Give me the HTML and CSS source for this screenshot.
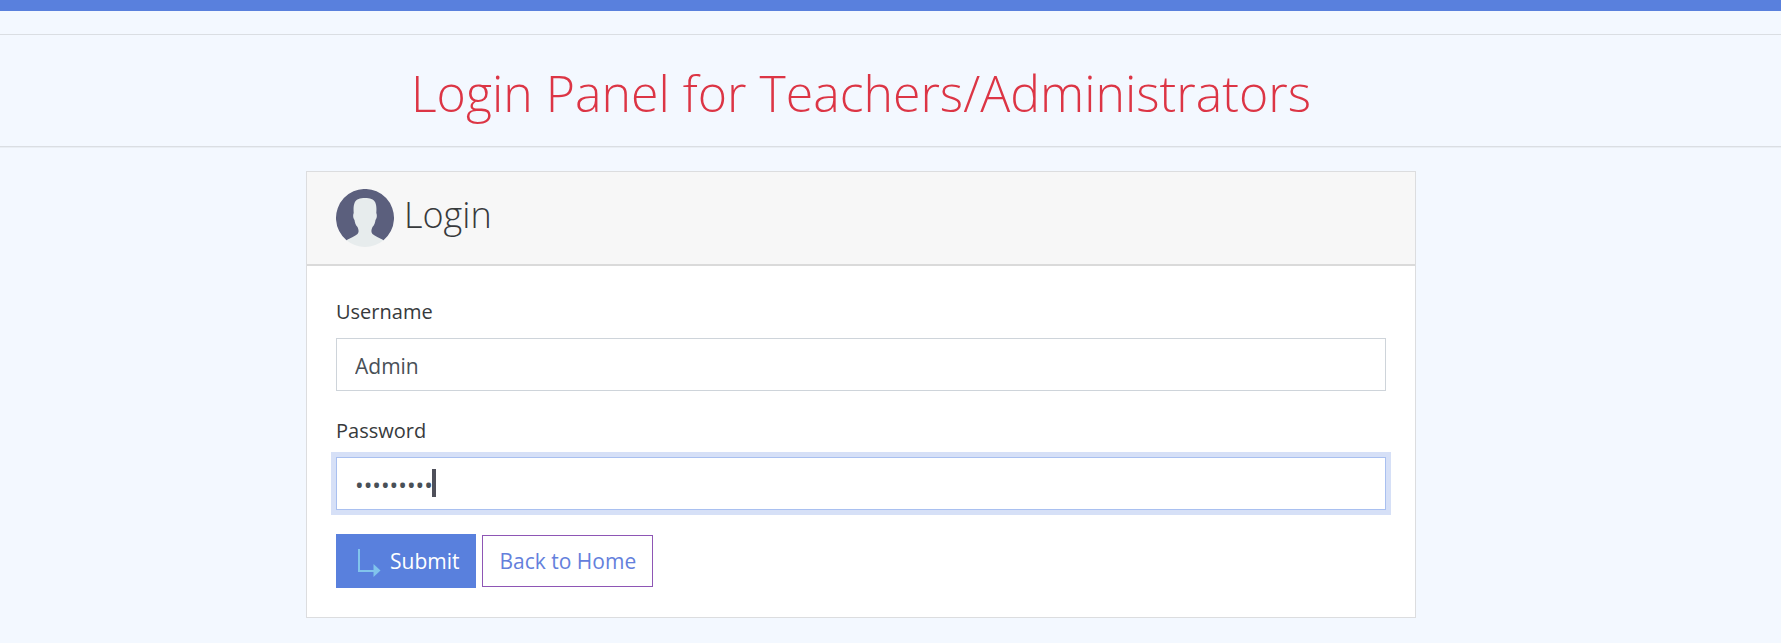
FILE: index.html
```html
<!DOCTYPE html>
<html lang="en">
<head>
<meta charset="utf-8">
<meta name="viewport" content="width=device-width, initial-scale=1">
<title>Login Panel</title>
<link rel="stylesheet" href="styles.css">
</head>
<body>
<div class="topbar"></div>
<header class="banner">
  <h1 class="banner-title">Login Panel for Teachers/Administrators</h1>
</header>
<main class="content">
  <section class="card">
    <div class="card-header">
      <svg class="avatar" viewBox="0 0 58 58" aria-hidden="true">
        <path fill="#5b5f7d" d="M10.500 51.300A29 29 0 1 1 47.500 51.300L29 45Z"/>
        <path fill="#e7eced" d="M10.500 51.300C15 48.500 19 47.300 21.500 45C23.300 43.200 22.500 40 21.500 38C19.600 36 18.800 33.500 18.500 31C17 29.500 16.800 26 17.700 24C17.500 20 17.300 17 18.700 13.500C20.500 10 24 9 29 9C34 9 37.500 10 39.300 13.500C40.700 17 40.500 20 40.300 24C41.200 26 41 29.500 39.500 31C39.200 33.500 38.400 36 36.500 38C35.500 40 34.700 43.200 36.500 45C39 47.300 43 48.500 47.500 51.300A29 29 0 0 1 10.500 51.300Z"/>
      </svg>
      <h2 class="card-title">Login</h2>
    </div>
    <form class="card-body">
      <div class="field">
        <label class="label" for="username">Username</label>
        <input class="input" id="username" type="text" value="Admin">
      </div>
      <div class="field">
        <label class="label" for="password">Password</label>
        <div class="input-wrap">
          <input class="input input-active" id="password" type="password" value="password1">
          <span class="caret"></span>
        </div>
      </div>
      <div class="actions">
        <button class="btn btn-primary" type="submit">
          <svg class="btn-icon" viewBox="0 0 24 32" aria-hidden="true">
            <path d="M2 4V26H17" fill="none" stroke="#81c4ec" stroke-width="2"/>
            <path d="M16.500 19L23.500 25.500L16.500 32Z" fill="#81c4ec"/>
          </svg>
          Submit
        </button>
        <a class="btn btn-outline" href="#">Back to Home</a>
      </div>
    </form>
  </section>
</main>
</body>
</html>
```
FILE: styles.css
```css
* {
  box-sizing: border-box;
}

body {
  margin: 0;
  background: #f3f8ff;
  color: #373a3c;
  font-family: "Open Sans", "Noto Sans", sans-serif;
  font-size: 21px;
  line-height: 32px;
}

.topbar {
  height: 11px;
  margin-bottom: 23px;
  background: #5980dd;
}

.banner {
  padding: 27px 59px 21px 0;
  border-top: 1px solid #dadee3;
  border-bottom: 1px solid #dadee3;
  box-shadow: 0 1px 0 #e9eef4;
}

.banner-title {
  margin: 0;
  color: #dc3545;
  font-size: 50px;
  font-weight: 300;
  line-height: 63px;
  text-align: center;
}

.content {
  padding: 24px 59px 24px 0;
}

.card {
  width: 100%;
  max-width: 1110px;
  margin: 0 auto;
  background: #fff;
  border: 1px solid #dcdddf;
}

.card-header {
  display: flex;
  gap: 10px;
  padding: 17px 29px;
  background: #f7f7f7;
  border-bottom: 2px solid #dadada;
}

.avatar {
  width: 58px;
  height: 58px;
}

.card-title {
  margin: 0;
  font-size: 36px;
  font-weight: 300;
  line-height: 52px;
}

.card-body {
  padding: 30px 29px 29px;
}

.field {
  margin-bottom: 24px;
}

.label {
  display: block;
  margin-bottom: 10px;
  font-size: 20px;
}

.input-wrap {
  position: relative;
}

.input {
  display: block;
  width: 100%;
  height: 53px;
  padding: 2px 18px 0;
  border: 1px solid #ced4da;
  border-radius: 0;
  background: #fff;
  color: #495057;
  font: inherit;
  outline: none;
}

.input-active {
  border-color: #a9c0f0;
  box-shadow: 0 0 0 5px #d6e0f7;
  font-size: 23px;
}

.caret {
  position: absolute;
  top: 12px;
  left: 96px;
  width: 4px;
  height: 28px;
  background: #4f505a;
}

.actions {
  display: flex;
  align-items: center;
  gap: 6px;
}

.btn {
  display: flex;
  align-items: center;
  border: 1px solid transparent;
  font: inherit;
  text-decoration: none;
}

.btn-primary {
  height: 54px;
  gap: 9px;
  padding: 0 16px 0 20px;
  background: #5980dd;
  color: #fff;
}

.btn-icon {
  width: 24px;
  height: 32px;
}

.btn-outline {
  height: 52px;
  padding: 0 16px;
  border-color: #8e56b5;
  color: #6480dc;
}
```
